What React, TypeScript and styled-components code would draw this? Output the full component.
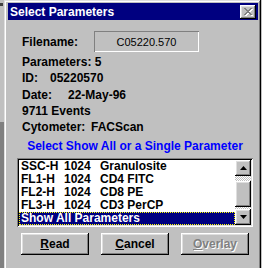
import React from 'react';
import styled, { createGlobalStyle, css } from 'styled-components';

const raised = css`
  box-shadow:
    inset -1px -1px #000,
    inset 1px 1px #fff,
    inset -2px -2px #808080,
    inset 2px 2px #dfdfdf;
`;

const GlobalStyle = createGlobalStyle`
  html, body {
    margin: 0;
    padding: 0;
    background: #c0c0c0;
  }
  body {
    font-family: "Liberation Sans", Arial, sans-serif;
    font-size: 12px;
    font-weight: bold;
    color: #000;
  }
`;

const PARAMS = [
  { name: 'SSC-H', range: '1024', label: 'Granulosite' },
  { name: 'FL1-H', range: '1024', label: 'CD4 FITC' },
  { name: 'FL2-H', range: '1024', label: 'CD8 PE' },
  { name: 'FL3-H', range: '1024', label: 'CD3 PerCP' },
];

const CloseGlyph = () => {
  const px = 'M0 0h2v1H0zM6 0h2v1H6zM1 1h2v1H1zM5 1h2v1H5zM2 2h4v1H2zM3 3h2v1H3zM2 4h4v1H2zM1 5h2v1H1zM5 5h2v1H5zM0 6h2v1H0zM6 6h2v1H6z';
  return (
    <svg width="9" height="8" viewBox="0 0 9 8">
      <path d={px} fill="#fff" transform="translate(1 1)" />
      <path d={px} fill="#808080" />
    </svg>
  );
};

const Arrow = ({ up }: { up?: boolean }) => (
  <svg width="7" height="4" viewBox="0 0 7 4">
    <path d={up ? 'M3.5 0L7 4H0z' : 'M0 0h7L3.5 4z'} fill="#000" />
  </svg>
);

const App = () => {
  return (
    <>
      <GlobalStyle />
      <Page>
        <LeftStrip>
          <StripTop>
            <Notch />
          </StripTop>
          <StripBottom />
        </LeftStrip>

        <Dialog>
          <TitleBar>
            <Title>Select Parameters</Title>
            <CloseButton>
              <CloseGlyph />
            </CloseButton>
          </TitleBar>

          <Body>
            <FilenameRow>
              <FieldLabel>Filename:</FieldLabel>
              <FileBox>C05220.570</FileBox>
            </FilenameRow>

            <Info>
              <InfoLine>Parameters: 5</InfoLine>
              <InfoLine>
                <InfoLabel $width={28}>ID:</InfoLabel>05220570
              </InfoLine>
              <InfoLine>
                <InfoLabel $width={46}>Date:</InfoLabel>22-May-96
              </InfoLine>
              <InfoLine>9711 Events</InfoLine>
              <InfoLine>
                <InfoLabel $width={69}>Cytometer:</InfoLabel>FACScan
              </InfoLine>
            </Info>

            <Hint>Select Show All or a Single Parameter</Hint>

            <ListBox>
              <Rows>
                {PARAMS.map(p => (
                  <Row key={p.name}>
                    <Col $width={43}>{p.name}</Col>
                    <Col $width={36}>{p.range}</Col>
                    <Col>{p.label}</Col>
                  </Row>
                ))}
                <Row $selected>Show All Parameters</Row>
              </Rows>
              <ScrollBar>
                <ArrowButton>
                  <Arrow up />
                </ArrowButton>
                <Track $height={5} />
                <Thumb />
                <Track />
                <ArrowButton>
                  <Arrow />
                </ArrowButton>
              </ScrollBar>
            </ListBox>

            <Buttons>
              <Button>
                <u>R</u>ead
              </Button>
              <Button>
                <u>C</u>ancel
              </Button>
              <Button $disabled>
                <u>O</u>verlay
              </Button>
            </Buttons>
          </Body>
        </Dialog>
      </Page>
    </>
  );
};

export default App;

const Page = styled.div`
  display: flex;
  width: 262px;
  height: 268px;
  overflow: hidden;
`;
const LeftStrip = styled.div`
  width: 4px;
  flex-shrink: 0;
  display: flex;
  flex-direction: column;
`;
const StripTop = styled.div`
  height: 122px;
  background: #c0c0c0;
  padding-top: 3px;
  box-sizing: border-box;
`;
const Notch = styled.div`
  width: 3px;
  height: 3px;
  background: #404040;
`;
const StripBottom = styled.div`
  flex: 1;
  background: #808080;
`;
const Dialog = styled.div`
  width: 257px;
  height: 290px;
  flex-shrink: 0;
  box-sizing: border-box;
  padding: 3px 3px 0 4px;
  background: #c0c0c0;
  box-shadow:
    inset -1px -1px #000,
    inset 1px 1px #dfdfdf,
    inset -2px -2px #808080,
    inset 2px 2px #fff;
`;
const TitleBar = styled.div`
  height: 17px;
  background: #000080;
  display: flex;
  align-items: center;
  justify-content: space-between;
  padding: 0 2px;
`;
const Title = styled.span`
  color: #fff;
  font-size: 12px;
  font-weight: bold;
`;
const CloseButton = styled.div`
  width: 16px;
  height: 14px;
  background: #c0c0c0;
  display: flex;
  align-items: center;
  justify-content: center;
  ${raised};
`;
const Body = styled.div`
  padding: 0 5px 0 9px;
`;
const FilenameRow = styled.div`
  display: flex;
  align-items: center;
  margin-top: 11px;
  padding-left: 5px;
`;
const FieldLabel = styled.span`
  width: 72px;
`;
const FileBox = styled.div`
  width: 105px;
  height: 21px;
  display: flex;
  align-items: center;
  justify-content: center;
  font-size: 11px;
  font-weight: normal;
  box-shadow:
    inset 1px 1px #808080,
    inset -1px -1px #fff;
`;
const Info = styled.div`
  margin-top: 2px;
  padding-left: 5px;
`;
const InfoLine = styled.div`
  line-height: 16.3px;
  white-space: nowrap;
`;
const InfoLabel = styled.span<{ $width: number }>`
  display: inline-block;
  width: ${p => p.$width}px;
`;
const Hint = styled.div`
  color: #0000ff;
  text-align: center;
  line-height: 16px;
  margin-top: 3px;
  white-space: nowrap;
`;
const ListBox = styled.div`
  margin-top: 4px;
  display: flex;
  padding: 2px;
  background: #fff;
  box-shadow:
    inset 1px 1px #808080,
    inset -1px -1px #fff,
    inset 2px 2px #000,
    inset -2px -2px #dfdfdf;
`;
const Rows = styled.div`
  flex: 1;
  display: flex;
  flex-direction: column;
`;
const Row = styled.div<{ $selected?: boolean }>`
  height: 13px;
  line-height: 13px;
  display: flex;
  padding-left: 2px;
  white-space: nowrap;
  ${p =>
    p.$selected &&
    css`
      background: #000080;
      color: #fff;
      outline: 1px dotted #ffff00;
      outline-offset: -1px;
    `}
`;
const Col = styled.span<{ $width?: number }>`
  ${p => p.$width && `width: ${p.$width}px;`}
  flex-shrink: 0;
`;
const ScrollBar = styled.div`
  width: 16px;
  display: flex;
  flex-direction: column;
`;
const ArrowButton = styled.div`
  height: 16px;
  flex-shrink: 0;
  background: #c0c0c0;
  display: flex;
  align-items: center;
  justify-content: center;
  ${raised};
`;
const Track = styled.div<{ $height?: number }>`
  ${p => (p.$height ? `height: ${p.$height}px;` : 'flex: 1;')}
  background: repeating-conic-gradient(#c0c0c0 0% 25%, #fff 0% 50%) 0 0 / 2px 2px;
`;
const Thumb = styled.div`
  height: 26px;
  background: #c0c0c0;
  ${raised};
`;
const Buttons = styled.div`
  display: flex;
  justify-content: center;
  gap: 12px;
  margin-top: 6px;
`;
const Button = styled.div<{ $disabled?: boolean }>`
  width: 68px;
  height: 22px;
  display: flex;
  align-items: center;
  justify-content: center;
  background: #c0c0c0;
  ${raised};
  ${p =>
    p.$disabled &&
    css`
      color: #808080;
      text-shadow: 1px 1px #fff;
    `}
`;
